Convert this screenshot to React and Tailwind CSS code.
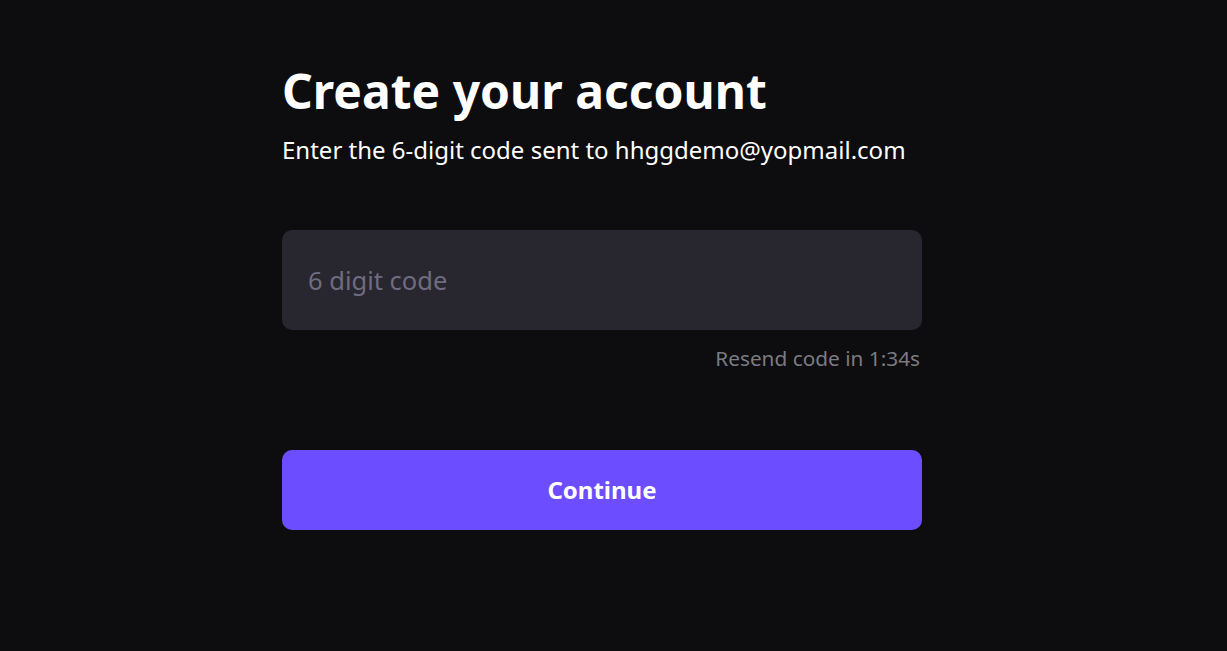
export default function App() {
  return (
    <div
      className="min-h-screen w-full bg-[#0d0d0f] text-white"
      style={{ fontFamily: '"Noto Sans", sans-serif' }}
    >
      <div className="w-[640px] ml-[282px] pt-[58px]">
        <h1 className="text-[48px] leading-[66px] font-bold tracking-normal">Create your account</h1>
        <p className="text-[24px] leading-[32px] mt-[10px] text-white">
          Enter the 6-digit code sent to hhggdemo@yopmail.com
        </p>

        <input
          type="text"
          placeholder="6 digit code"
          className="mt-[64px] block w-full h-[100px] rounded-[10px] bg-[#28262f] px-[26px] text-[25.5px] text-white placeholder:text-[#6f6b80] outline-none"
        />
        <div className="mt-[14px] text-right pr-[2px] text-[20.8px] leading-[28px] text-[#7b7b82]">
          Resend code in 1:34s
        </div>

        <button
          type="button"
          className="mt-[78px] w-full h-[80px] rounded-[10px] bg-[#6c4dff] text-[24px] font-bold text-white"
        >
          Continue
        </button>
      </div>
    </div>
  );
}
